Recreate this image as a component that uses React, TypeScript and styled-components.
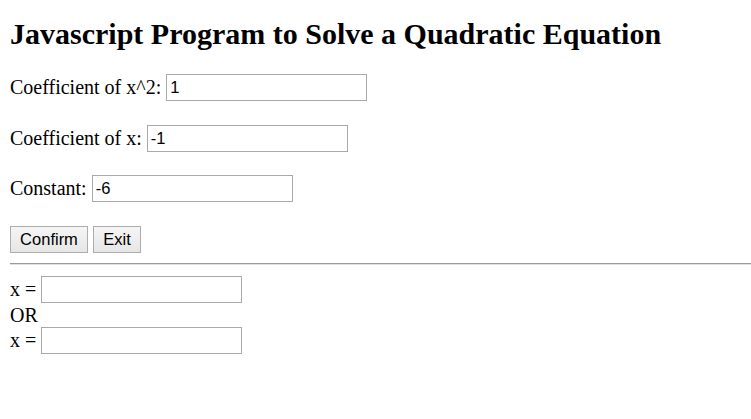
import React from "react";
import styled, { createGlobalStyle } from "styled-components";

const Global = createGlobalStyle`
  html, body { margin: 0; padding: 0; background: #fff; }
  body { font-family: "Liberation Serif", "Times New Roman", serif; color: #000; }
`;

const Page = styled.div`
  display: flex;
  flex-direction: column;
  padding: 0 0 0 10px;
`;

const Title = styled.h2`
  margin: 16px 0 0 0;
  font-size: 30px;
  font-weight: bold;
  line-height: 36px;
`;

const Form = styled.div`
  display: flex;
  flex-direction: column;
  gap: 23.5px;
  margin-top: 22px;
`;

const Field = styled.div`
  display: flex;
  align-items: center;
  height: 27px;
  font-size: 20px;
`;

const Label = styled.span`
  margin-right: 5px;
  white-space: pre;
`;

const TextInput = styled.input`
  box-sizing: border-box;
  width: 201px;
  height: 27px;
  border: 1px solid #a9a9a9;
  padding: 0 3px;
  font-family: "Liberation Sans", Arial, sans-serif;
  font-size: 16.5px;
  color: #000;
  background: #fff;
  outline: none;
`;

const ButtonRow = styled.div`
  display: flex;
  gap: 5px;
  margin-top: 24px;
`;

const Button = styled.button<{ $w: number }>`
  box-sizing: border-box;
  width: ${(p) => p.$w}px;
  height: 27px;
  border: 1px solid #adadad;
  background: linear-gradient(#f5f5f5, #e6e6e6);
  font-family: "Liberation Sans", Arial, sans-serif;
  font-size: 16.5px;
  color: #000;
  padding: 0;
`;

const Rule = styled.hr`
  margin: 10px 0 0 0;
  border: none;
  border-top: 1px solid #9a9a9a;
  border-bottom: 1px solid #e0e0e0;
  height: 0;
`;

const Results = styled.div`
  display: flex;
  flex-direction: column;
  margin-top: 11px;
  font-size: 20px;
`;

const ResultRow = styled.div`
  display: flex;
  align-items: center;
  height: 27px;
`;

const Or = styled.div`
  height: 24px;
  line-height: 24px;
`;

export default function App() {
  return (
    <>
      <Global />
      <Page>
        <Title>Javascript Program to Solve a Quadratic Equation</Title>
        <Form>
          <Field>
            <Label>Coefficient of x^2:</Label>
            <TextInput defaultValue="1" />
          </Field>
          <Field>
            <Label>Coefficient of x:</Label>
            <TextInput defaultValue="-1" />
          </Field>
          <Field>
            <Label>Constant:</Label>
            <TextInput defaultValue="-6" />
          </Field>
        </Form>
        <ButtonRow>
          <Button $w={78}>Confirm</Button>
          <Button $w={48}>Exit</Button>
        </ButtonRow>
        <Rule />
        <Results>
          <ResultRow>
            <Label>x =</Label>
            <TextInput />
          </ResultRow>
          <Or>OR</Or>
          <ResultRow>
            <Label>x =</Label>
            <TextInput />
          </ResultRow>
        </Results>
      </Page>
    </>
  );
}
